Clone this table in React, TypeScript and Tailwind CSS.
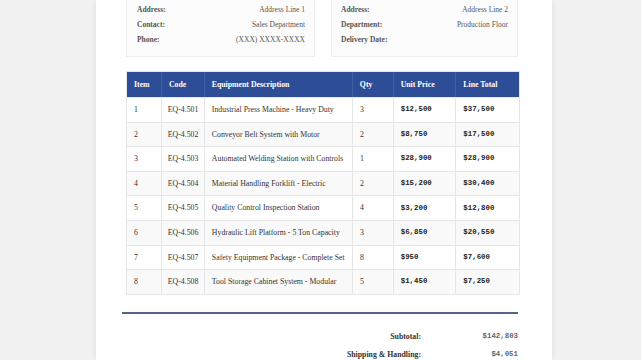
import React from "react";

const rows = [
  ["1", "EQ-4.501", "Industrial Press Machine - Heavy Duty", "3", "$12,500", "$37,500"],
  ["2", "EQ-4.502", "Conveyor Belt System with Motor", "2", "$8,750", "$17,500"],
  ["3", "EQ-4.503", "Automated Welding Station with Controls", "1", "$28,900", "$28,900"],
  ["4", "EQ-4.504", "Material Handling Forklift - Electric", "2", "$15,200", "$30,400"],
  ["5", "EQ-4.505", "Quality Control Inspection Station", "4", "$3,200", "$12,800"],
  ["6", "EQ-4.506", "Hydraulic Lift Platform - 5 Ton Capacity", "3", "$6,850", "$20,550"],
  ["7", "EQ-4.507", "Safety Equipment Package - Complete Set", "8", "$950", "$7,600"],
  ["8", "EQ-4.508", "Tool Storage Cabinet System - Modular", "5", "$1,450", "$7,250"],
];

const widths = ["w-[34px]", "w-[43px]", "w-[149px]", "w-[41px]", "w-[63px]", "w-[64px]"];

function InfoRow({ label, value }: { label: string; value: string }) {
  return (
    <div className="flex h-[15px] items-center justify-between whitespace-nowrap">
      <span className="font-bold text-[#555]">{label}</span>
      <span className="text-[#555]">{value}</span>
    </div>
  );
}

const mono = { fontFamily: '"Liberation Mono", "Courier New", monospace' };

export default function App() {
  const serif = { fontFamily: '"Liberation Serif", "Times New Roman", serif' };
  return (
    <div className="w-[641px] h-[360px] overflow-hidden bg-[#f1f1f1]" style={serif}>
      <div className="ml-[96px] w-[456px] h-[360px] bg-white shadow-[0_0_6px_rgba(0,0,0,0.08)] pl-[30px] pr-[32px]">
        {/* info boxes */}
        <div className="flex gap-[16px] text-[7.5px]">
          <div className="w-[189px] bg-[#fcfcfc] border-x border-b border-[#eeeeee] pt-[2px] pb-[9px] pl-[10px] pr-[9px]">
            <InfoRow label="Address:" value="Address Line 1" />
            <InfoRow label="Contact:" value="Sales Department" />
            <InfoRow label="Phone:" value="(XXX) XXXX-XXXX" />
          </div>
          <div className="w-[187px] bg-[#fcfcfc] border-x border-b border-[#eeeeee] pt-[2px] pb-[9px] pl-[9px] pr-[9px]">
            <InfoRow label="Address:" value="Address Line 2" />
            <InfoRow label="Department:" value="Production Floor" />
            <InfoRow label="Delivery Date:" value="" />
          </div>
        </div>

        {/* table */}
        <div className="mt-[14px] w-[394px] border border-[#e6e6e6] text-[7.8px] whitespace-nowrap">
          <div className="flex h-[25px] bg-[#2d4e96] text-white font-bold">
            {["Item", "Code", "Equipment Description", "Qty", "Unit Price", "Line Total"].map((h, i) => (
              <div key={h} className={`${widths[i]} flex items-center px-[7px] ${i > 0 ? "border-l border-[#3f5fa5]" : ""}`}>
                {h}
              </div>
            ))}
          </div>
          {rows.map((r, ri) => (
            <div key={ri} className={`flex h-[24.6px] border-t border-[#e6e6e6] ${ri % 2 === 1 ? "bg-[#f9f9f9]" : "bg-white"}`}>
              {r.map((c, i) => (
                <div
                  key={i}
                  className={`${widths[i]} flex items-center ${i === 1 ? "px-[6px]" : "px-[7px]"} ${i > 0 ? "border-l border-[#e6e6e6]" : ""} ${i >= 4 ? "font-bold text-[#222] text-[7.4px]" : "text-[#333]"}`}
                  style={i >= 4 ? mono : undefined}
                >
                  {c}
                </div>
              ))}
            </div>
          ))}
        </div>

        {/* divider */}
        <div className="mt-[17px] ml-[-4px] w-[396px] h-[2px] bg-[#55648a]" />

        {/* totals */}
        <div className="mt-[14px] w-[392px] text-[7.8px] whitespace-nowrap">
          <div className="flex h-[18px] items-center justify-end">
            <span className="font-bold text-[#333]">Subtotal:</span>
            <span className="w-[97px] text-right font-bold text-[#666] text-[7.4px]" style={mono}>$142,803</span>
          </div>
          <div className="flex h-[18px] items-center justify-end">
            <span className="font-bold text-[#333]">Shipping &amp; Handling:</span>
            <span className="w-[97px] text-right font-bold text-[#666] text-[7.4px]" style={mono}>$4,051</span>
          </div>
        </div>
      </div>
    </div>
  );
}
